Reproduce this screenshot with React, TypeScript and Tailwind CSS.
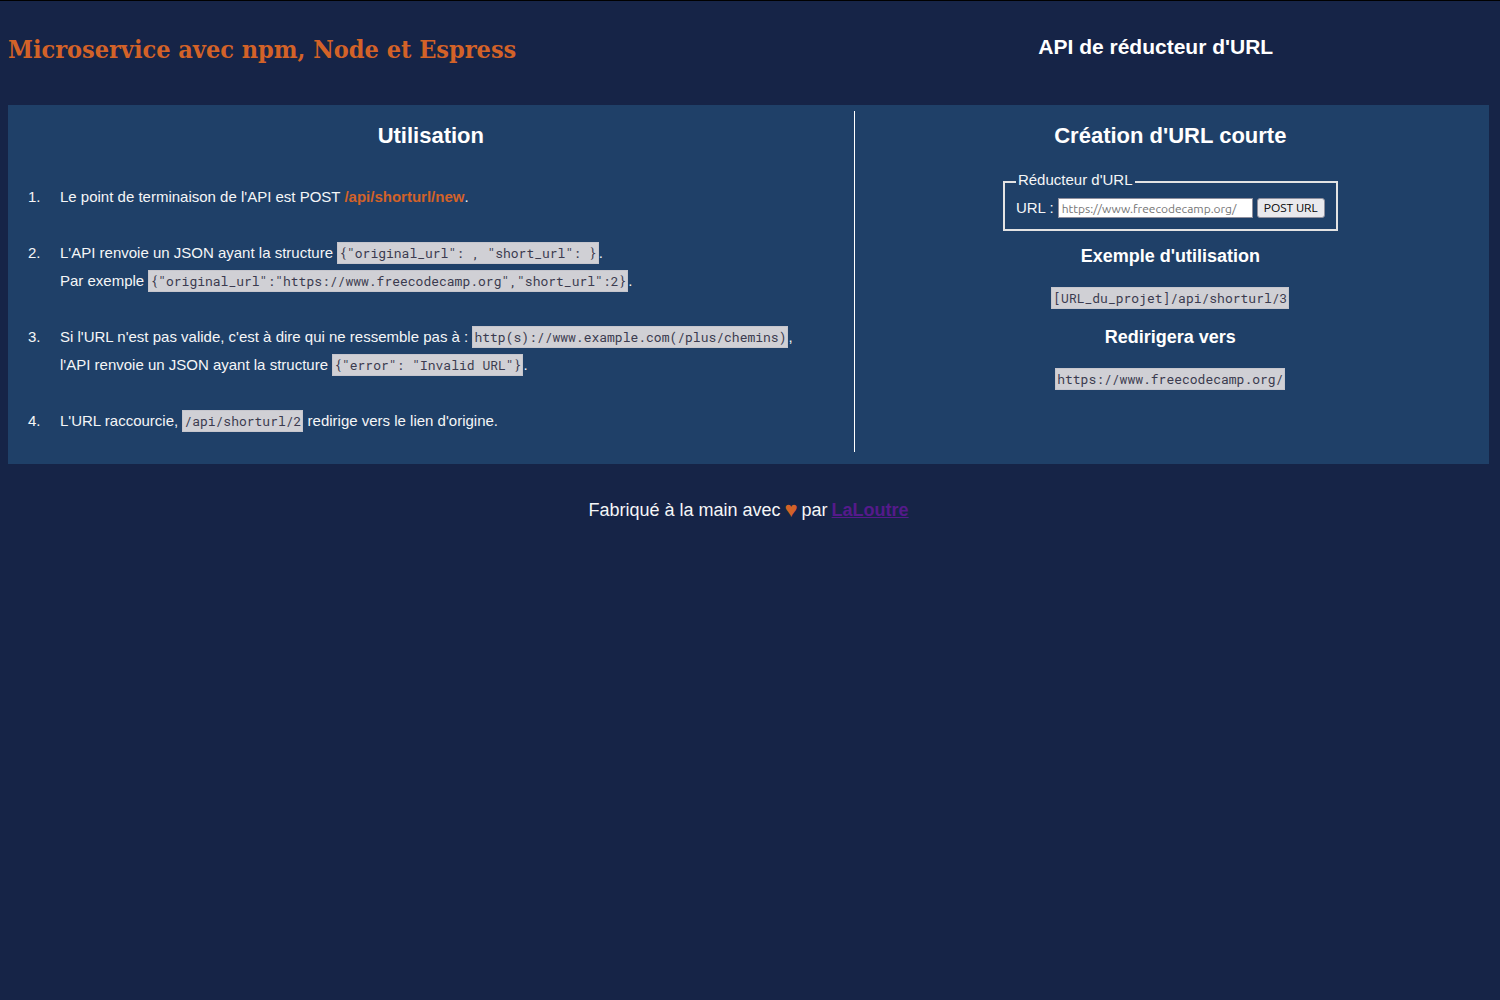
import type { ReactNode } from "react";

function Code({ children }: { children: ReactNode }) {
  return (
    <code className="border border-[#c6c6cd] bg-[#d0d0d5] px-px py-px font-['Roboto_Mono','Liberation_Mono',monospace] text-[13px] text-[#3b3b4f]">
      {children}
    </code>
  );
}

function Step({ number, children }: { number: number; children: ReactNode }) {
  return (
    <li className="flex">
      <span className="w-8 shrink-0">{number}.</span>
      <div>{children}</div>
    </li>
  );
}

export default function App() {
  return (
    <div className="min-h-screen border-t border-black bg-[#162447] pr-[11px] pl-2 font-['Liberation_Sans',sans-serif] text-[15px] leading-7 text-[#f5f6f7]">
      <header className="flex pt-8">
        <h1 className="w-[55%] font-['Roboto_Slab','DejaVu_Serif_Condensed','DejaVu_Serif',serif] text-[25px] leading-[34px] font-bold whitespace-nowrap text-[#d36228]">
          Microservice avec npm, Node et Espress
        </h1>
        <h2 className="w-[45%] text-center text-[21px] leading-7 font-bold text-white">
          API de réducteur d'URL
        </h2>
      </header>

      <main className="mt-[38px] flex bg-[#1f4068] pt-[6px] pb-3">
        <section className="w-[57.1%] px-5 pt-2 pb-[17px]">
          <h2 className="mb-[30px] text-center text-[22px] leading-[34px] font-bold text-white">Utilisation</h2>
          <ol className="flex flex-col gap-7">
            <Step number={1}>
              Le point de terminaison de l'API est POST{" "}
              <strong className="text-[#d36228]">/api/shorturl/new</strong>.
            </Step>
            <Step number={2}>
              L'API renvoie un JSON ayant la structure <Code>{'{"original_url": , "short_url": }'}</Code>.
              <br />
              Par exemple <Code>{'{"original_url":"https://www.freecodecamp.org","short_url":2}'}</Code>.
            </Step>
            <Step number={3}>
              Si l'URL n'est pas valide, c'est à dire qui ne ressemble pas à :{" "}
              <Code>http(s)://www.example.com(/plus/chemins)</Code>,
              <br />
              l'API renvoie un JSON ayant la structure <Code>{'{"error": "Invalid URL"}'}</Code>.
            </Step>
            <Step number={4}>
              L'URL raccourcie, <Code>/api/shorturl/2</Code> redirige vers le lien d'origine.
            </Step>
          </ol>
        </section>

        <section className="flex flex-1 flex-col items-center border-l border-white pt-2 pr-[3px]">
          <h2 className="text-[22px] leading-[34px] font-bold text-white">Création d'URL courte</h2>
          <form onSubmit={(e) => e.preventDefault()} className="mt-[17px]">
            <fieldset className="border-2 border-[#e3e3e3] px-[11px] pb-[7px]">
              <legend className="px-[2px] pb-1 leading-5">Réducteur d'URL</legend>
              <div className="flex items-center gap-1">
                <label htmlFor="url">URL :</label>
                <input
                  id="url"
                  type="text"
                  placeholder="https://www.freecodecamp.org/"
                  className="h-5 w-[195px] border border-[#8f8f9d] bg-white px-[3px] font-['Ubuntu','Noto_Sans',sans-serif] text-xs text-black placeholder:text-[#757575]"
                />
                <button
                  type="submit"
                  className="h-5 rounded-[3px] border border-[#8f8f9d] bg-[#e9e9ed] px-[6px] font-['Ubuntu','Noto_Sans',sans-serif] text-xs leading-4 text-black"
                >
                  POST URL
                </button>
              </div>
            </fieldset>
          </form>
          <h3 className="mt-[11px] text-lg leading-7 font-bold text-white">Exemple d'utilisation</h3>
          <p className="mt-[14px]">
            <Code>[URL_du_projet]/api/shorturl/3</Code>
          </p>
          <h3 className="mt-[11px] text-lg leading-7 font-bold text-white">Redirigera vers</h3>
          <p className="mt-[14px]">
            <Code>https://www.freecodecamp.org/</Code>
          </p>
        </section>
      </main>

      <footer className="mt-8 flex items-center justify-center gap-1 text-lg leading-7">
        <span>Fabriqué à la main avec</span>
        <span className="text-[22px] text-[#d36228]">♥</span>
        <span>par</span>
        <a href="#laloutre" className="font-bold text-[#551a8b] underline">
          LaLoutre
        </a>
      </footer>
    </div>
  );
}
